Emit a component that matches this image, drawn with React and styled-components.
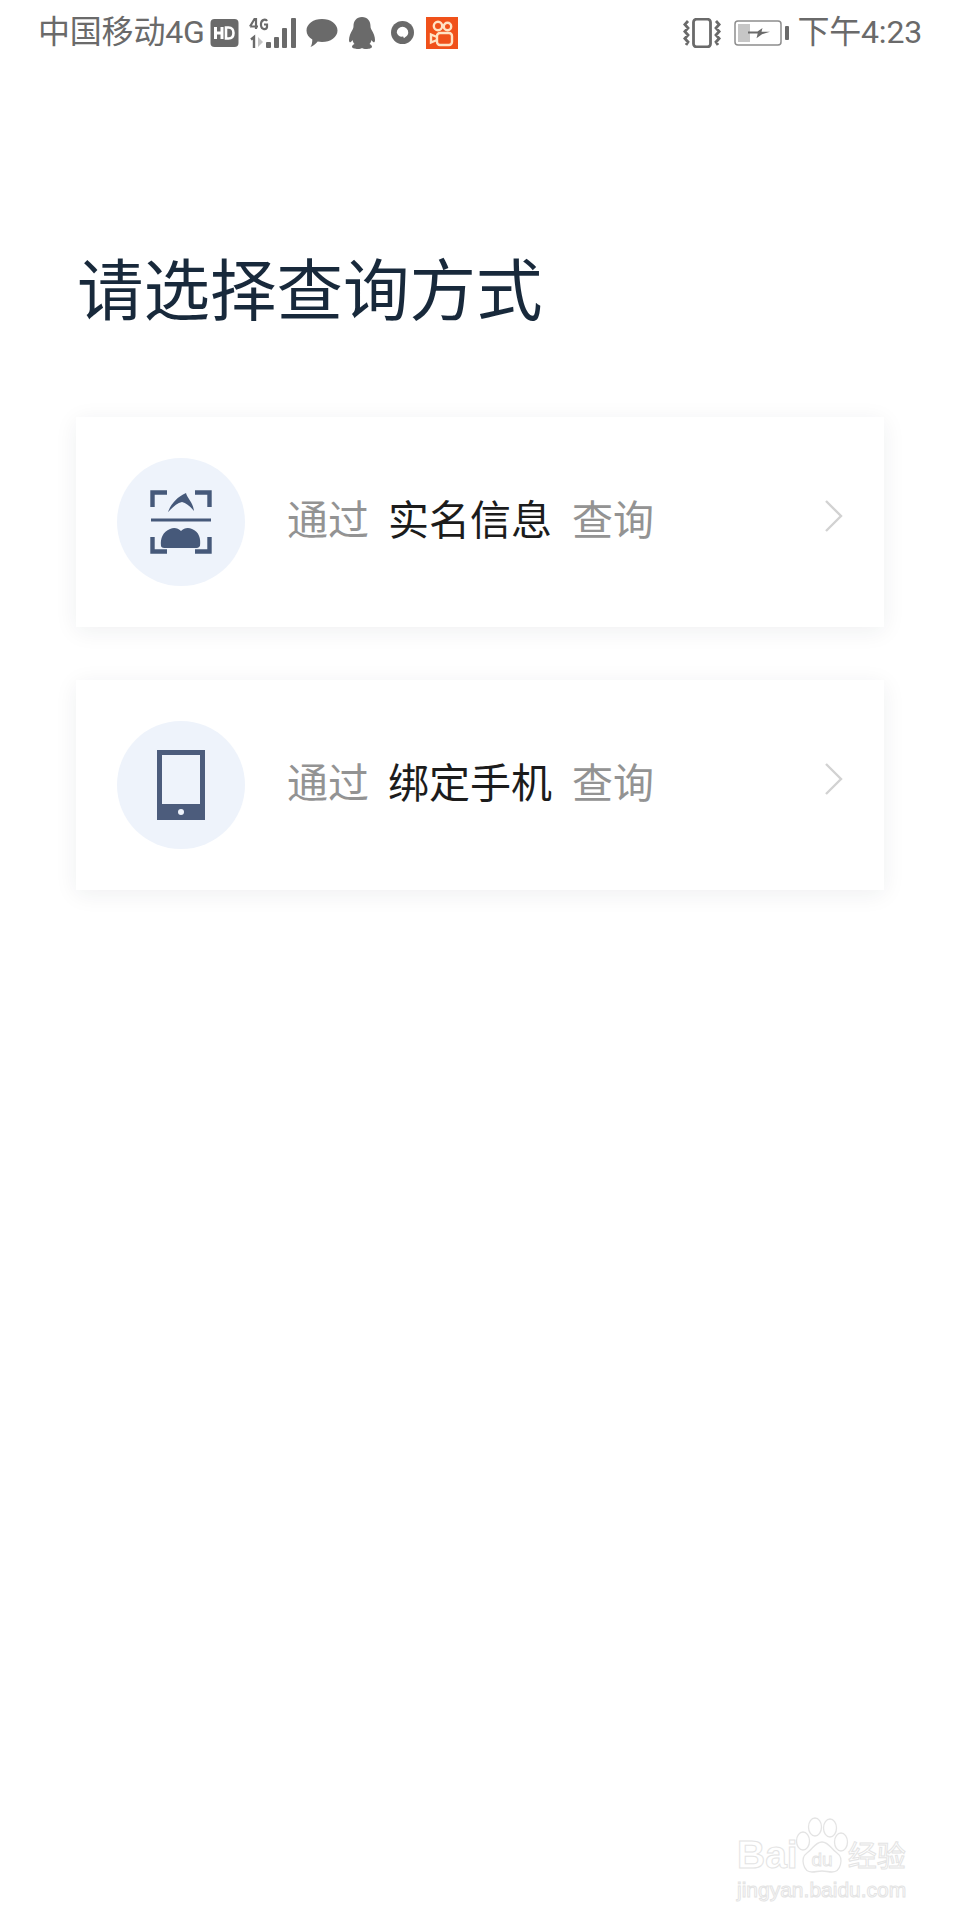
import React from 'react'
import styled, { createGlobalStyle } from 'styled-components'

const Global = createGlobalStyle`
  html, body {
    margin: 0;
    padding: 0;
    background: #fff;
  }
  * {
    box-sizing: border-box;
  }
`

const Page = styled.div`
  position: relative;
  width: 960px;
  height: 1920px;
  overflow: hidden;
  background: #fff;
  font-family: Roboto, "Noto Sans CJK SC", sans-serif;
`

const StatusBar = styled.div`
  height: 64px;
  padding: 16px 38px 0 38px;
  display: flex;
  justify-content: space-between;
  align-items: flex-start;
  color: #6a6a6a;
`

const StatusGroup = styled.div`
  display: flex;
  align-items: center;
  height: 33px;
`

const StatusText = styled.span`
  font-size: 32px;
  line-height: 33px;
  margin-left: ${p => p.$gap || 0}px;
  letter-spacing: -0.2px;
  white-space: nowrap;
`

const StatusIcon = styled.svg`
  display: block;
  flex: none;
  margin-left: ${p => p.$gap || 0}px;
`

const Content = styled.main`
  padding: 182px 76px 0 76px;
`

const Title = styled.h1`
  margin: 0 0 79px 1px;
  font-size: 66.5px;
  line-height: 92px;
  font-weight: 400;
  color: #18293b;
  white-space: nowrap;
`

const CardList = styled.div`
  display: flex;
  flex-direction: column;
  gap: 53px;
`

const Card = styled.div`
  height: 210px;
  width: 808px;
  padding: 0 40px 0 41px;
  display: flex;
  align-items: center;
  background: #fff;
  box-shadow: 0 4px 22px rgba(30, 40, 60, 0.07);
`

const IconCircle = styled.div`
  width: 128px;
  height: 128px;
  border-radius: 50%;
  background: #eef3fb;
  display: flex;
  align-items: center;
  justify-content: center;
  flex: none;
`

const Label = styled.div`
  margin: -3px 0 0 42px;
  flex: 1;
  display: flex;
  gap: 20px;
  font-size: 41px;
  line-height: 56px;
  color: #939393;
  white-space: nowrap;
`

const Strong = styled.span`
  margin-left: -1px;
  color: #1c1c1c;
`

const ChevronIcon = styled.svg`
  flex: none;
  margin-top: -13px;
`

const Watermark = styled.div`
  position: absolute;
  left: 737px;
  top: 1817px;
  width: 172px;
  color: transparent;
  -webkit-text-stroke: 1px #e4e4e4;
`

const WatermarkRow = styled.div`
  display: flex;
  align-items: flex-end;
  height: 56px;
  font-family: "Liberation Sans", "Noto Sans CJK SC", sans-serif;
`

const WatermarkBai = styled.span`
  font-size: 39px;
  line-height: 36px;
  font-weight: 700;
`

const WatermarkCn = styled.span`
  font-size: 29px;
  line-height: 32px;
  margin-left: 50px;
`

const WatermarkUrl = styled.div`
  font-family: "Liberation Sans", sans-serif;
  font-size: 21px;
  line-height: 26px;
  margin-top: 4px;
  white-space: nowrap;
`

const Paw = styled.svg`
  position: absolute;
  left: 58px;
  top: 0;
`

const HdIcon = () => (
  <StatusIcon $gap={5} width="29" height="28" viewBox="0 0 28 28">
    <rect width="28" height="28" rx="4" fill="#6a6a6a" />
    <path d="M5 8v12M11.500 8v12M5 14h6.500" stroke="#fff" strokeWidth="3" fill="none" />
    <path d="M15.500 8.500v11h2.500c3.400 0 5-2.200 5-5.500s-1.600-5.500-5-5.500z" stroke="#fff" strokeWidth="2.600" fill="none" />
  </StatusIcon>
)

const SignalIcon = () => (
  <StatusIcon $gap={10} width="49" height="32" viewBox="0 0 49 32">
    <path d="M1 9.500 5.500 2H7v10M1 9.500h8M18 4c-1-2-5.500-2-6 2.500v2C12.500 13 17.500 13 18 10V7.500h-3" stroke="#6a6a6a" strokeWidth="2.200" fill="none" />
    <path d="M2 22.500 5 20v11" stroke="#6a6a6a" strokeWidth="2.400" fill="none" />
    <path d="M9 20v10l5-5z" fill="#c4c4c4" />
    <rect x="17" y="25" width="5" height="6" rx="1" fill="#6a6a6a" />
    <rect x="25" y="20" width="5" height="11" rx="1" fill="#6a6a6a" />
    <rect x="33" y="11" width="5" height="20" rx="1" fill="#6a6a6a" />
    <rect x="42" y="1" width="5" height="30" rx="1" fill="#6a6a6a" />
  </StatusIcon>
)

const BubbleIcon = () => (
  <StatusIcon $gap={8} width="32" height="30" viewBox="0 0 32 30">
    <path d="M16 1c8.500 0 15.500 4.800 15.500 11.500S24.500 24 16 24c-1.500 0-3-.2-4.300-.5C9.500 26 7.500 28 4.500 29c1.300-2 1.800-4 1.800-7.500C2.800 19.500.5 16.300.5 12.500.5 5.800 7.500 1 16 1z" fill="#6a6a6a" />
  </StatusIcon>
)

const PenguinIcon = () => (
  <StatusIcon $gap={10} width="28" height="32" viewBox="0 0 28 32">
    <path d="M14 0c5.500 0 8.500 4 8.500 9 0 1.500.3 2.500 1 3.800 2 3 3.500 7 3.500 10.200 0 2-.8 2.500-1.500 2.200-.8-.3-1.500-1.200-2-2.200-.3 1.500-1 3-2 4 1.500.8 2.500 1.600 2.500 2.800 0 1.400-3 2.200-6 2.200-1.700 0-3-.4-4-1-1 .6-2.300 1-4 1-3 0-6-.8-6-2.200 0-1.200 1-2 2.500-2.800-1-1-1.700-2.500-2-4-.5 1-1.200 1.900-2 2.200-.7.300-1.500-.2-1.500-2.200 0-3.200 1.500-7.200 3.500-10.200.7-1.300 1-2.300 1-3.800C5.500 4 8.500 0 14 0z" fill="#6a6a6a" />
  </StatusIcon>
)

const RingIcon = () => (
  <StatusIcon $gap={15} width="23" height="23" viewBox="0 0 24 24">
    <circle cx="12" cy="12" r="12" fill="#6a6a6a" />
    <path d="M6 12a6 6 0 0 1 12 0c0 2.300-1.400 4-3 4.800L13.500 18l-.8-1.700H12A5.800 5.800 0 0 1 6 12z" fill="#fff" />
  </StatusIcon>
)

const KuaishouIcon = () => (
  <StatusIcon $gap={12} width="32" height="32" viewBox="0 0 32 32">
    <rect width="32" height="32" fill="#f0511a" />
    <circle cx="12" cy="9" r="4.200" stroke="#ffe3c4" strokeWidth="2.400" fill="none" />
    <circle cx="21.500" cy="9.500" r="3.700" stroke="#ffe3c4" strokeWidth="2.400" fill="none" />
    <rect x="11" y="16" width="15" height="12" rx="3" stroke="#ffe3c4" strokeWidth="2.400" fill="none" />
    <path d="M11 20l-6-2.500v8L11 23" stroke="#ffe3c4" strokeWidth="2.400" fill="none" />
  </StatusIcon>
)

const VibrateIcon = () => (
  <StatusIcon width="38" height="30" viewBox="0 0 38 30">
    <rect x="10.500" y="1.200" width="17" height="27.600" rx="3" stroke="#6a6a6a" strokeWidth="2.800" fill="none" />
    <path d="M5 3 1.800 6.500 5 10l-3.200 3.500L5 17l-3.200 3.500L5 24l-2 3M33 3l3.200 3.500L33 10l3.200 3.500L33 17l3.200 3.500L33 24l2 3" stroke="#6a6a6a" strokeWidth="2.800" fill="none" />
  </StatusIcon>
)

const BatteryIcon = () => (
  <StatusIcon $gap={13} width="56" height="26" viewBox="0 0 56 26">
    <rect x="1" y="1" width="46" height="24" rx="3" stroke="#8d8d8d" strokeWidth="1.500" fill="#fff" />
    <rect x="4" y="4" width="12" height="18" fill="#c6c6c6" />
    <rect x="51" y="6" width="4" height="14" rx="1" fill="#6a6a6a" />
    <path d="M14 11.500h9.500l5-3.500-1 3.800H36l-8 2.400-5.500 4 1.200-4.700H14z" fill="#6a6a6a" />
  </StatusIcon>
)

const FaceIcon = () => (
  <svg width="62" height="64" viewBox="0 0 62 64">
    <g stroke="#46597a" strokeWidth="4.400" fill="none">
      <path d="M17 2.500H2.500V17M45 2.500h14.500V17M2.500 47v14.500H17M59.500 47v14.500H45" />
      <path d="M1 30h60" strokeWidth="3" />
    </g>
    <path d="M18 22C21 14 27 7 36 3c1 5 7 9 8 18-4-5-8-8-12-9-5 1-9 5-14 10z" fill="#46597a" />
    <path d="M11 56c-1-8 2-14 9-17 4-2 8-1 11 2 3-3 7-4 11-2 7 3 9 9 8 17-1 1-2 2-3 2H14c-1 0-3-1-3-2z" fill="#46597a" />
  </svg>
)

const TabletIcon = () => (
  <svg width="48" height="70" viewBox="0 0 48 70">
    <rect width="48" height="70" fill="#4c5c7c" />
    <rect x="5" y="5" width="38" height="49" fill="#eef3fb" />
    <circle cx="24" cy="62" r="3" fill="#eef3fb" />
  </svg>
)

const Chevron = () => (
  <ChevronIcon width="20" height="34" viewBox="0 0 20 34">
    <path d="M2 2l15 15L2 32" stroke="#d2d2d2" strokeWidth="2.400" fill="none" />
  </ChevronIcon>
)

const queryOptions = [
  { name: '实名信息', icon: <FaceIcon /> },
  { name: '绑定手机', icon: <TabletIcon /> },
]

export default function App() {
  return (
    <Page>
      <Global />
      <StatusBar>
        <StatusGroup>
          <StatusText>中国移动4G</StatusText>
          <HdIcon />
          <SignalIcon />
          <BubbleIcon />
          <PenguinIcon />
          <RingIcon />
          <KuaishouIcon />
        </StatusGroup>
        <StatusGroup>
          <VibrateIcon />
          <BatteryIcon />
          <StatusText $gap={7}>下午4:23</StatusText>
        </StatusGroup>
      </StatusBar>
      <Content>
        <Title>请选择查询方式</Title>
        <CardList>
          {queryOptions.map(option => (
            <Card key={option.name}>
              <IconCircle>{option.icon}</IconCircle>
              <Label>
                <span>通过</span>
                <Strong>{option.name}</Strong>
                <span>查询</span>
              </Label>
              <Chevron />
            </Card>
          ))}
        </CardList>
      </Content>
      <Watermark>
        <WatermarkRow>
          <WatermarkBai>Bai</WatermarkBai>
          <WatermarkCn>经验</WatermarkCn>
        </WatermarkRow>
        <Paw width="54" height="58" viewBox="0 0 54 58">
          <g stroke="#e4e4e4" strokeWidth="1.300" fill="#fff">
            <ellipse cx="8" cy="24" rx="6.500" ry="9" />
            <ellipse cx="20" cy="10" rx="6.500" ry="9" />
            <ellipse cx="35" cy="11" rx="6.500" ry="9" />
            <ellipse cx="46" cy="25" rx="6.500" ry="9" />
            <path d="M27 25c7 0 9 7 15 11 7 5 4 19-5 19-4 0-6-1-10-1s-6 1-10 1c-9 0-12-14-5-19 6-4 8-11 15-11z" />
          </g>
          <text x="27" y="49" textAnchor="middle" fontSize="19" fontFamily="Liberation Sans, sans-serif" fill="none" stroke="#e4e4e4" strokeWidth="0.900">du</text>
        </Paw>
        <WatermarkUrl>jingyan.baidu.com</WatermarkUrl>
      </Watermark>
    </Page>
  )
}
